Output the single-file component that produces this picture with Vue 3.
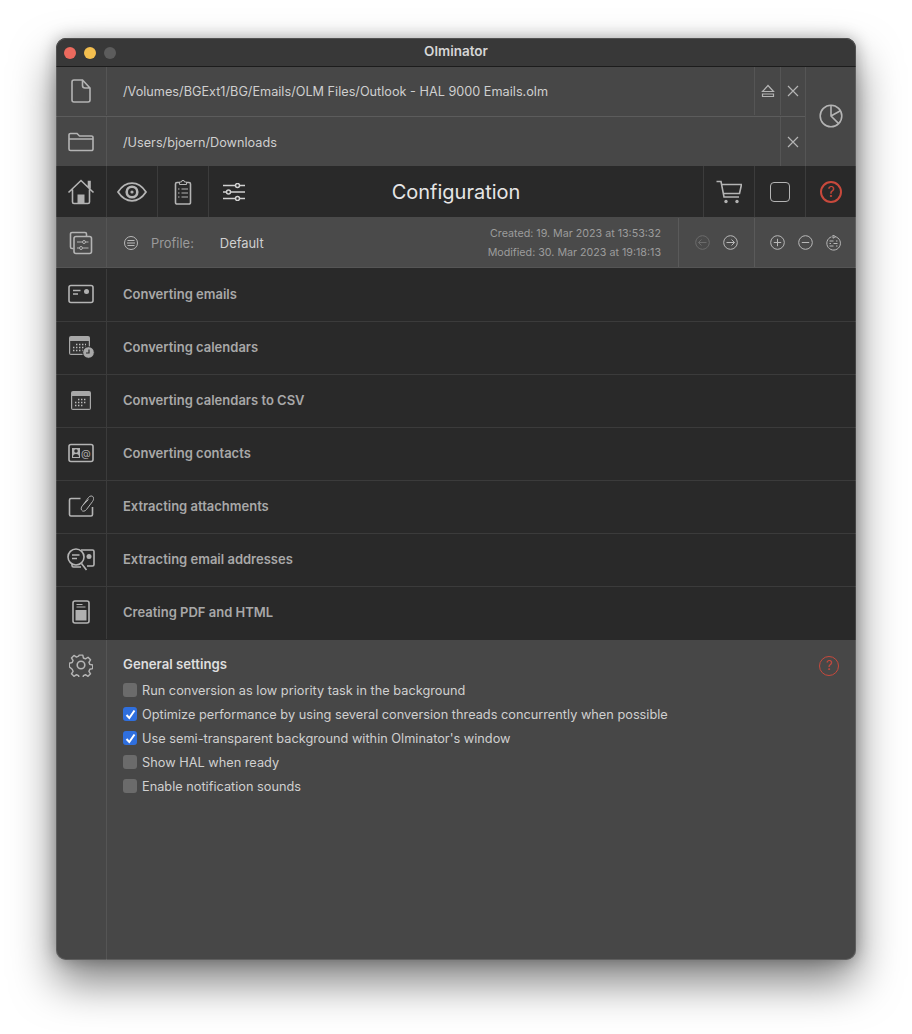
<template>
  <div class="page">
    <div class="window">
      <div class="titlebar">
        <div class="lights">
          <span class="light red"></span>
          <span class="light yellow"></span>
          <span class="light grey"></span>
        </div>
        <div class="title">Olminator</div>
      </div>

      <div class="paths">
        <div class="path-rows">
          <div class="path-row first">
            <div class="side">
              <svg width="20" height="24" viewBox="0 0 20 24" class="ico"><path d="M1 3a2 2 0 0 1 2-2h8.500L19 9v12a2 2 0 0 1-2 2H3a2 2 0 0 1-2-2zM11.500 1v5.500A2.500 2.500 0 0 0 14 9h5"/></svg>
            </div>
            <div class="path-text">/Volumes/BGExt1/BG/Emails/OLM Files/Outlook - HAL 9000 Emails.olm</div>
            <div class="path-btn eject">
              <svg width="14" height="14" viewBox="0 0 14 14" class="ico thin"><path d="M7 1.500 1.500 7.500h11zM1.500 10h11v2.500h-11z"/></svg>
            </div>
            <div class="path-btn close">
              <svg width="12" height="12" viewBox="0 0 12 12" class="ico thin"><path d="M1 1l10 10M11 1 1 11"/></svg>
            </div>
          </div>
          <div class="path-row second">
            <div class="side">
              <svg width="26" height="20" viewBox="0 0 26 20" class="ico"><path d="M1 3a1.500 1.500 0 0 1 1.500-1.500h6.500l2.500 2.500h12A1.500 1.500 0 0 1 25 5.500v11.500a1.500 1.500 0 0 1-1.500 1.500h-21A1.500 1.500 0 0 1 1 17zM1 7h24"/></svg>
            </div>
            <div class="path-text">/Users/bjoern/Downloads</div>
            <div class="path-btn close">
              <svg width="12" height="12" viewBox="0 0 12 12" class="ico thin"><path d="M1 1l10 10M11 1 1 11"/></svg>
            </div>
          </div>
        </div>
        <div class="pie">
          <svg width="24" height="24" viewBox="0 0 24 24" class="ico"><circle cx="12" cy="12" r="10.800"/><path d="M12 1.200V12l7.700 7.600M12 12l9.400-5.200"/></svg>
        </div>
      </div>

      <div class="nav">
        <div class="nav-left">
          <div class="nav-cell">
            <svg width="28" height="26" viewBox="0 0 28 26" class="ico"><path d="M1.500 13.500 14 1.500l12.500 12M5.500 10.500V23a1.500 1.500 0 0 0 1.500 1.500h14a1.500 1.500 0 0 0 1.500-1.500V10.500M21.500 8V2.500h1.500v7"/><path d="M10.500 24.500v-9h7v9z" class="solid"/></svg>
          </div>
          <div class="nav-cell">
            <svg width="30" height="20" viewBox="0 0 30 20" class="ico bold"><path d="M1 10C5 4 9.500 1.200 15 1.200S25 4 29 10c-4 6-8.500 8.800-14 8.800S5 16 1 10z"/><circle cx="15" cy="10" r="5.300" class="ring"/><circle cx="15" cy="10" r="1.600" class="solid"/></svg>
          </div>
          <div class="nav-cell">
            <svg width="18" height="26" viewBox="0 0 18 26" class="ico"><path d="M5.500 3.500H3A1.500 1.500 0 0 0 1.500 5v18.500A1.500 1.500 0 0 0 3 25h12a1.500 1.500 0 0 0 1.500-1.500V5A1.500 1.500 0 0 0 15 3.500h-2.500"/><path d="M5.500 5.500V3h2l.5-1.500h2L10.500 3h2v2.500zM7.500 10h6.500M7.500 14h6.500M7.500 18h6.500M4 10h1.500M4 14h1.500M4 18h1.500" class="hair"/></svg>
          </div>
          <div class="nav-sliders">
            <svg width="22" height="18" viewBox="0 0 22 18" class="ico bright"><path d="M0 2.500h12M17 2.500h5M0 9h3M8 9h14M0 15.500h12M17 15.500h5"/><circle cx="14.500" cy="2.500" r="2"/><circle cx="5.500" cy="9" r="2"/><circle cx="14.500" cy="15.500" r="2"/></svg>
          </div>
        </div>
        <div class="nav-title">Configuration</div>
        <div class="nav-right">
          <div class="nav-cell">
            <svg width="26" height="24" viewBox="0 0 26 24" class="ico"><path d="M.5 1.500h4.500l3 15.500h15M5.500 4.500h20l-2 9H7.500"/><circle cx="10" cy="21.500" r="1.700" class="solid"/><circle cx="21" cy="21.500" r="1.700" class="solid"/></svg>
          </div>
          <div class="nav-cell">
            <div class="square"></div>
          </div>
          <div class="nav-cell last">
            <div class="help">?</div>
          </div>
        </div>
      </div>

      <div class="profile">
        <div class="side">
          <svg width="24" height="24" viewBox="0 0 24 24" class="ico"><path d="M4.500 17.500H3A1.500 1.500 0 0 1 1.500 16V3A1.500 1.500 0 0 1 3 1.500h13A1.500 1.500 0 0 1 17.500 3v2"/><rect x="5" y="5.500" width="17.500" height="17" rx="2"/><path d="M8 11h5M17 11h2.500M8 17h2M14 17h5.500" class="hair"/><circle cx="15" cy="11" r="1.500" class="hair"/><circle cx="12" cy="17" r="1.500" class="hair"/></svg>
        </div>
        <div class="profile-main">
          <svg width="14" height="14" viewBox="0 0 14 14" class="ico hair-ico"><circle cx="7" cy="7" r="6.500"/><path d="M3.500 4.500h7M3 7h8M3.500 9.500h7"/></svg>
          <span class="profile-label">Profile:</span>
          <span class="profile-name">Default</span>
          <div class="dates">
            <div>Created: 19. Mar 2023 at 13:53:32</div>
            <div>Modified: 30. Mar 2023 at 19:18:13</div>
          </div>
        </div>
        <div class="profile-arrows">
          <svg width="15" height="15" viewBox="0 0 15 15" class="ico hair-ico dim"><circle cx="7.500" cy="7.500" r="6.800"/><path d="M11.500 7.500h-8M6.500 4.500l-3 3 3 3"/></svg>
          <svg width="15" height="15" viewBox="0 0 15 15" class="ico hair-ico"><circle cx="7.500" cy="7.500" r="6.800"/><path d="M3.500 7.500h8M8.500 4.500l3 3-3 3"/></svg>
        </div>
        <div class="profile-actions">
          <svg width="15" height="15" viewBox="0 0 15 15" class="ico hair-ico"><circle cx="7.500" cy="7.500" r="6.800"/><path d="M3.800 7.500h7.400M7.500 3.800v7.400"/></svg>
          <svg width="15" height="15" viewBox="0 0 15 15" class="ico hair-ico"><circle cx="7.500" cy="7.500" r="6.800"/><path d="M3.800 7.500h7.400"/></svg>
          <svg width="15" height="16" viewBox="0 0 15 16" class="ico hair-ico"><path d="M9 1.600A6.800 6.800 0 1 1 5.500 1.800M7 0v3.200L9.500 1.600z"/><path d="M3.500 6h4M10 6h1.500M3.500 8.500h1.500M7.500 8.500h4M3.500 11h4M10 11h1.500"/></svg>
        </div>
      </div>

      <div class="sections">
        <div v-for="item in sections" :key="item.label" class="section">
          <div class="side">
            <svg v-if="item.icon === 'email'" width="26" height="20" viewBox="0 0 26 20" class="ico"><rect x="1" y="1.500" width="24" height="17" rx="2"/><path d="M5 6.500h7.500M5 10h5"/><circle cx="18.500" cy="7.500" r="2.500" class="solid"/></svg>
            <svg v-if="item.icon === 'calendar-clock'" width="28" height="24" viewBox="0 0 28 24"><rect x="2" y="1" width="21" height="19" rx="2" fill="#a8a8a8"/><rect x="3.200" y="6" width="18.600" height="12.800" fill="#333"/><path d="M9 9.500h10M6 12.500h13M6 15.500h10" stroke="#bdbdbd" stroke-width="1.400" stroke-dasharray="1.400 1.600" fill="none"/><circle cx="21.500" cy="17.500" r="5.800" fill="#a8a8a8" stroke="#2a2a2a"/><path d="M22 14.500v3.500h-3" stroke="#2a2a2a" stroke-width="1.200" fill="none"/></svg>
            <svg v-if="item.icon === 'calendar'" width="22" height="20" viewBox="0 0 22 20"><rect x="1" y="1" width="20" height="19" rx="2" fill="#a8a8a8"/><rect x="2.200" y="6" width="17.600" height="12.800" fill="#333"/><path d="M8 9.500h9M5 12.500h12M5 15.500h9" stroke="#bdbdbd" stroke-width="1.400" stroke-dasharray="1.400 1.600" fill="none"/></svg>
            <svg v-if="item.icon === 'contact'" width="26" height="20" viewBox="0 0 26 20" class="ico"><rect x="1" y="1.500" width="24" height="17" rx="2"/><rect x="4" y="5" width="8" height="10" class="solid"/><circle cx="8" cy="8" r="1.800" fill="#2a2a2a" stroke="none"/><path d="M5 14c0-2 1-3 3-3s3 1 3 3z" fill="#2a2a2a" stroke="none"/><text x="13" y="13.500" class="at">@</text></svg>
            <svg v-if="item.icon === 'attachment'" width="26" height="24" viewBox="0 0 26 24" class="ico"><path d="M12.500 4.500H3A1.500 1.500 0 0 0 1.500 6v14.500A1.500 1.500 0 0 0 3 22h20a1.500 1.500 0 0 0 1.500-1.500V13"/><path d="M15 11 20.500 3.500C22 1.500 24.500 1.500 25.300 3.200 26 4.800 25.500 6 24.500 7.500L18.500 15.500C17 17.500 14.500 17.800 13.500 16 12.800 14.600 13.300 13.300 14.200 12L20.500 5.500" class="hair"/></svg>
            <svg v-if="item.icon === 'search'" width="28" height="23" viewBox="0 0 28 23" class="ico"><path d="M14 2h11.500A1.500 1.500 0 0 1 27 3.500v13a1.500 1.500 0 0 1-1.500 1.500H20M5 15v2.500A1.500 1.500 0 0 0 6.500 19H14"/><circle cx="9" cy="9" r="8" fill="#2a2a2a"/><path d="M5 7h7.500M5 10.500h5M14.500 15.500l5 6.500"/><circle cx="22" cy="8.500" r="2.500" class="solid"/></svg>
            <svg v-if="item.icon === 'pdf'" width="18" height="24" viewBox="0 0 18 24" class="ico"><rect x="1" y="1" width="16" height="22" rx="2"/><path d="M4.500 4.500h6M4.500 7h9" class="hair"/><rect x="3.500" y="10" width="11" height="10.500" class="solid"/></svg>
          </div>
          <div class="section-label">{{ item.label }}</div>
        </div>
      </div>

      <div class="settings">
        <div class="side gear">
          <svg width="24" height="24" viewBox="0 0 24 24" class="ico"><path d="M10 1h4l.7 3.200 2.300 1 2.800-1.800 2.800 2.800-1.800 2.800 1 2.300 3.200.7v4l-3.200.7-1 2.300 1.800 2.800-2.800 2.800-2.800-1.800-2.300 1-.7 3.200h-4l-.7-3.200-2.300-1-2.800 1.800-2.800-2.800 1.800-2.800-1-2.300L-1 14v-4l3.200-.7 1-2.300-1.800-2.800 2.800-2.800 2.800 1.800 2.300-1z" transform="translate(1.200 1.200) scale(.9)" stroke-linejoin="round"/><circle cx="12" cy="12" r="3.800"/></svg>
        </div>
        <div class="settings-main">
          <div class="settings-head">
            <div class="settings-title">General settings</div>
            <div class="help small">?</div>
          </div>
          <label v-for="opt in options" :key="opt.label" class="option">
            <span class="box" :class="{ checked: opt.checked }">
              <svg v-if="opt.checked" width="11" height="11" viewBox="0 0 11 11"><path d="M1.500 6 4.300 9 9.500 1.500" fill="none" stroke="#fff" stroke-width="2"/></svg>
            </span>
            <span>{{ opt.label }}</span>
          </label>
        </div>
      </div>
    </div>
  </div>
</template>

<script setup>
const sections = [
  { label: 'Converting emails', icon: 'email' },
  { label: 'Converting calendars', icon: 'calendar-clock' },
  { label: 'Converting calendars to CSV', icon: 'calendar' },
  { label: 'Converting contacts', icon: 'contact' },
  { label: 'Extracting attachments', icon: 'attachment' },
  { label: 'Extracting email addresses', icon: 'search' },
  { label: 'Creating PDF and HTML', icon: 'pdf' },
];

const options = [
  { label: 'Run conversion as low priority task in the background', checked: false },
  { label: 'Optimize performance by using several conversion threads concurrently when possible', checked: true },
  { label: "Use semi-transparent background within Olminator's window", checked: true },
  { label: 'Show HAL when ready', checked: false },
  { label: 'Enable notification sounds', checked: false },
];
</script>

<style scoped>
.page {
  width: 912px;
  height: 1034px;
  box-sizing: border-box;
  padding: 38px 56px 74px;
  background: #fff;
  font-family: Inter, "Liberation Sans", sans-serif;
  overflow: hidden;
}

.window {
  height: 922px;
  position: relative;
  display: flex;
  flex-direction: column;
  background: #474747;
  border-radius: 10px;
  overflow: hidden;
  box-shadow: 0 22px 44px rgba(0, 0, 0, 0.5), 0 0 16px rgba(0, 0, 0, 0.28);
}
/* thin light edge round the whole window, above the rows */
.window::after {
  content: "";
  position: absolute;
  inset: 0;
  border-radius: 10px;
  box-shadow: inset 0 0 0 1px rgba(255, 255, 255, 0.13);
  pointer-events: none;
}

.titlebar {
  height: 29px;
  flex: none;
  display: flex;
  align-items: center;
  position: relative;
  background: #383838;
  border-bottom: 1px solid #1c1c1c;
  box-sizing: border-box;
}
.lights {
  display: flex;
  gap: 8px;
  margin-left: 8px;
  margin-top: 1px;
}
.light {
  width: 12px;
  height: 12px;
  border-radius: 50%;
}
.red { background: #ec6a5e; }
.yellow { background: #f4bf4f; }
.grey { background: #5c5c5c; }
.title {
  position: absolute;
  left: 0;
  right: 0;
  padding-bottom: 2px;
  text-align: center;
  font-size: 13.5px;
  font-weight: 600;
  color: #d6d6d6;
}

.ico {
  fill: none;
  stroke: #b4b4b4;
  stroke-width: 1.6;
  flex: none;
}
.ico.thin { stroke-width: 1.2; }
.ico.bold { stroke-width: 1.8; }
.ico.bright { stroke: #d0d0d0; stroke-width: 1.5; }
.ico .ring { stroke-width: 2.6; }
.hair-ico { stroke: #b8b8b8; stroke-width: 1; }
.hair-ico.dim { stroke: #6b6b6b; }
.hair { stroke-width: 1; }
.solid { fill: #b0b0b0; stroke: none; }
.at {
  font-size: 10px;
  fill: #b0b0b0;
  stroke: none;
  font-family: Inter, sans-serif;
}

.side {
  width: 51px;
  flex: none;
  display: flex;
  align-items: center;
  justify-content: center;
  box-sizing: border-box;
  border-right: 1px solid #555;
}

.paths {
  height: 99px;
  flex: none;
  display: flex;
}
.path-rows {
  flex: 1;
  display: flex;
  flex-direction: column;
}
.path-row {
  flex: 1;
  display: flex;
  align-items: stretch;
}
.path-row.first {
  flex: none;
  height: 50px;
  box-sizing: border-box;
  padding-bottom: 1px;
  border-bottom: 1px solid #5c5c5c;
}
.path-row.second .path-text {
  padding-top: 1px;
}
.path-text {
  flex: 1;
  display: flex;
  align-items: center;
  padding-left: 16px;
  font-size: 12.7px;
  color: #cfcfcf;
}
.path-btn {
  display: flex;
  align-items: center;
  justify-content: center;
  box-sizing: border-box;
  border-left: 1px solid #555;
  width: 25px;
}
.eject { width: 26px; }
.pie {
  width: 51px;
  flex: none;
  display: flex;
  align-items: center;
  justify-content: center;
  padding-bottom: 1px;
  border-left: 1px solid #555;
  box-sizing: border-box;
}

.nav {
  height: 51px;
  flex: none;
  display: flex;
  align-items: center;
  position: relative;
  background: #292929;
}
.nav-left,
.nav-right {
  display: flex;
  height: 100%;
}
.nav-right {
  margin-left: auto;
}
.nav-cell {
  width: 51px;
  display: flex;
  align-items: center;
  justify-content: center;
  box-sizing: border-box;
  border-right: 1px solid #3c3c3c;
}
.nav-right .nav-cell {
  border-right: 0;
  border-left: 1px solid #3c3c3c;
}
.nav-sliders {
  width: 49px;
  display: flex;
  align-items: center;
  justify-content: center;
}
.nav-title {
  position: absolute;
  left: 0;
  right: 0;
  padding-top: 1px;
  text-align: center;
  font-size: 20px;
  color: #e6e6e6;
  pointer-events: none;
}
.square {
  width: 20px;
  height: 20px;
  box-sizing: border-box;
  border: 1.5px solid #b4b4b4;
  border-radius: 4px;
}
.help {
  width: 22px;
  height: 22px;
  box-sizing: border-box;
  border: 2px solid #c8493c;
  border-radius: 50%;
  color: #c8493c;
  font-size: 14px;
  line-height: 18px;
  text-align: center;
}

.profile {
  height: 51px;
  flex: none;
  display: flex;
  padding-top: 1px;
  background: #4a4a4a;
  border-bottom: 1px solid #555;
  box-sizing: border-box;
}
.profile-main {
  flex: 1;
  display: flex;
  align-items: center;
  padding: 1px 17px 0;
  font-size: 12.9px;
}
.profile-label {
  margin-left: 13px;
  color: #9a9a9a;
}
.profile-name {
  margin-left: 26px;
  color: #d0d0d0;
}
.dates {
  margin-left: auto;
  margin-top: -1px;
  text-align: right;
  font-size: 10.7px;
  line-height: 19px;
  color: #9c9c9c;
}
.profile-arrows,
.profile-actions {
  display: flex;
  align-items: center;
  justify-content: center;
  box-sizing: border-box;
  border-left: 1px solid #5a5a5a;
}
.profile-arrows {
  width: 76px;
  gap: 13px;
}
.profile-actions {
  width: 102px;
  gap: 13px;
}

.sections {
  flex: none;
  padding-bottom: 1px;
  background: #292929;
}
.section {
  height: 53px;
  display: flex;
  box-sizing: border-box;
  border-top: 1px solid #3b3b3b;
}
.section:first-child {
  border-top-color: transparent;
}
.section .side {
  border-right-color: #3b3b3b;
  padding-bottom: 2px;
}
.section-label {
  display: flex;
  align-items: center;
  padding-left: 16px;
  padding-bottom: 2px;
  font-size: 13px;
  font-weight: 600;
  color: #a8a8a8;
}

.settings {
  flex: 1;
  display: flex;
}
.gear {
  align-items: flex-start;
  padding-top: 13px;
}
.settings-main {
  flex: 1;
  padding: 16px 16px 0;
  font-size: 12.75px;
  color: #d0d0d0;
}
.settings-head {
  display: flex;
  justify-content: space-between;
  height: 22px;
}
.settings-title {
  font-size: 13.2px;
  font-weight: 600;
  color: #dedede;
}
.help.small {
  width: 20px;
  height: 20px;
  margin-right: 1px;
  border-width: 1.5px;
  line-height: 17px;
  font-size: 13px;
}
.option {
  display: flex;
  align-items: center;
  gap: 5px;
  height: 24px;
}
.box {
  width: 14px;
  height: 14px;
  border-radius: 3px;
  background: #6b6b6b;
  display: flex;
  align-items: center;
  justify-content: center;
}
.box.checked {
  background: #2f6fde;
}
</style>

<style>
html, body {
  background: #fff;
}
</style>
